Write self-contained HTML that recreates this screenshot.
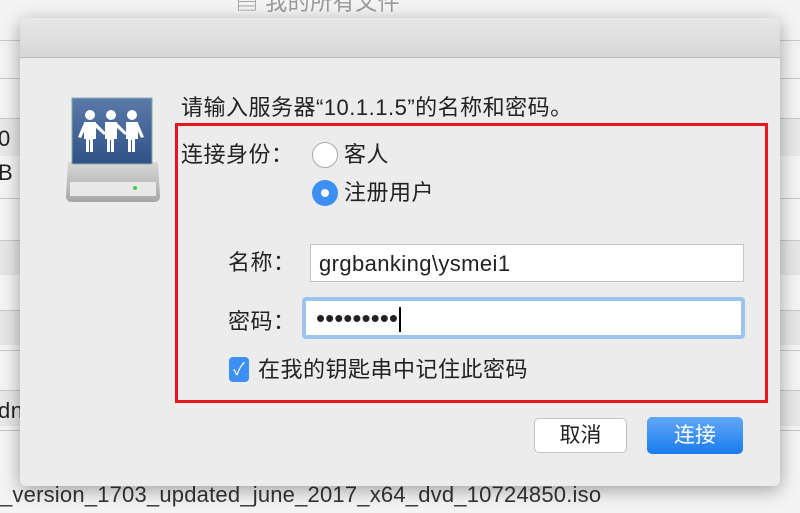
<!DOCTYPE html>
<html><head><meta charset="utf-8"><style>
*{margin:0;padding:0;box-sizing:border-box}
body{width:800px;height:513px;overflow:hidden;background:#f4f4f4;position:relative;font-family:"Liberation Sans","Noto Sans CJK SC",sans-serif;color:#222}
.abs{position:absolute}
.row{position:absolute;left:0;width:800px;border-top:1px solid #c8c8c8}
.dlg{left:20px;top:18px;width:760px;height:468px;background:#ececec;border-radius:6px;box-shadow:0 4px 18px rgba(0,0,0,.35);overflow:hidden}
.tb{left:0;top:0;width:760px;height:40px;background:linear-gradient(#e8e8e8,#d6d6d6);border-bottom:1px solid #b8b8b8}
.t{font-size:22px;line-height:26px;white-space:nowrap;letter-spacing:0.5px}
.red{left:175px;top:123px;width:593px;height:280px;border:3px solid #e8141e}
.inp{background:#fff;border:1px solid #c4c4c4;font-size:22px;line-height:22px}
.btn{border-radius:5px;font-size:21px;text-align:center}
</style></head><body>
<div class="row" style="top:40px;border-color:#ccc"></div>
<div class="row" style="top:78px"></div>
<div class="row" style="top:118px;background:#e8e8e8;height:38px"></div>
<div class="row" style="top:198px"></div>
<div class="row" style="top:240px;background:#e6e6e6;height:35px"></div>
<div class="row" style="top:310px;background:#e6e6e6;height:35px"></div>
<div class="row" style="top:350px"></div>
<div class="row" style="top:390px;background:#e8e8e8;height:36px"></div>
<div class="row" style="top:430px"></div>
<div class="abs t" style="left:-2px;top:126px">0</div>
<div class="abs t" style="left:-2px;top:160px">B</div>
<div class="abs t" style="left:-2px;top:398px">dn</div>
<div class="abs t" style="left:0;top:482px;color:#333;letter-spacing:0.2px">_version_1703_updated_june_2017_x64_dvd_10724850.iso</div>
<div class="abs t" style="left:236px;top:-10px;color:#999">▤ 我的所有文件</div>
<div class="abs dlg">
 <div class="abs tb"></div>
</div>
<svg class="abs" style="left:64px;top:96px" width="98" height="108" viewBox="0 0 98 108">
 <defs><linearGradient id="b" x1="0" y1="0" x2="0" y2="1"><stop offset="0" stop-color="#5a7aaa"/><stop offset="1" stop-color="#2f5287"/></linearGradient>
 <linearGradient id="g" x1="0" y1="0" x2="0" y2="1"><stop offset="0" stop-color="#d8d8d8"/><stop offset="1" stop-color="#a6a6a6"/></linearGradient></defs>
 <path d="M4 66 L94 66 L96 100 Q96 106 90 106 L8 106 Q2 106 2 100 Z" fill="url(#g)"/>
 <rect x="6" y="86" width="86" height="14" fill="#e8e8e8"/>
 <circle cx="71" cy="92" r="2" fill="#4c4"/>
 <rect x="8" y="2" width="80" height="66" fill="url(#b)" stroke="#8aa" stroke-width="1"/>
 <g fill="#fff">
  <circle cx="26" cy="19" r="5"/><circle cx="47" cy="19" r="5"/><circle cx="68" cy="19" r="5"/>
  <path d="M20 26h12v17h-3v13h-3v-12h-1v12h-3v-13h-2zM41 26h12v17h-3v13h-3v-12h-1v12h-3v-13h-2zM62 26h12v17h-3v13h-3v-12h-1v12h-3v-13h-2z"/>
  <path d="M20 27l-6 14 3 1 5-11zM32 27l10 10-2 2-9-8zM53 27l10 10-2 2-9-8zM74 27l6 14-3 1-5-11z"/>
 </g>
</svg>
<div class="abs t" style="left:181px;top:95px">请输入服务器“10.1.1.5”的名称和密码。</div>
<div class="abs red"></div>
<div class="abs t" style="left:181px;top:142px">连接身份：</div>
<div class="abs" style="left:312px;top:142px;width:26px;height:26px;border-radius:50%;background:#fff;border:1px solid #aaa"></div>
<div class="abs t" style="left:344px;top:142px">客人</div>
<div class="abs" style="left:312px;top:180px;width:26px;height:26px;border-radius:50%;background:#3b8ff5"></div>
<div class="abs" style="left:321px;top:189px;width:8px;height:8px;border-radius:50%;background:#fff"></div>
<div class="abs t" style="left:344px;top:180px">注册用户</div>
<div class="abs t" style="left:228px;top:250px">名称：</div>
<div class="abs inp" style="left:310px;top:244px;width:434px;height:38px;padding:8px 8px;color:#222;letter-spacing:0.4px">grgbanking\ysmei1</div>
<div class="abs t" style="left:228px;top:309px">密码：</div>
<div class="abs" style="left:302px;top:297px;width:443px;height:42px;border-radius:4px;background:#9cc4f0"></div>
<div class="abs inp" style="left:306px;top:301px;width:435px;height:34px;border:none;padding:6px 10px;font-size:26px;letter-spacing:0px">•••••••••<span style="border-left:2px solid #000;margin-left:1px;font-size:22px"></span></div>
<div class="abs" style="left:229px;top:357px;width:20px;height:25px;border-radius:4px;background:#3b8ff5;color:#fff;font-size:17px;text-align:center;line-height:25px">✓</div>
<div class="abs t" style="left:258px;top:357px">在我的钥匙串中记住此密码</div>
<div class="abs btn" style="left:534px;top:418px;width:93px;height:35px;background:#fff;border:1px solid #c4c4c4;line-height:33px">取消</div>
<div class="abs btn" style="left:647px;top:417px;width:96px;height:37px;background:linear-gradient(#62a8f8,#1a7bf0);color:#fff;line-height:37px">连接</div>
</body></html>
